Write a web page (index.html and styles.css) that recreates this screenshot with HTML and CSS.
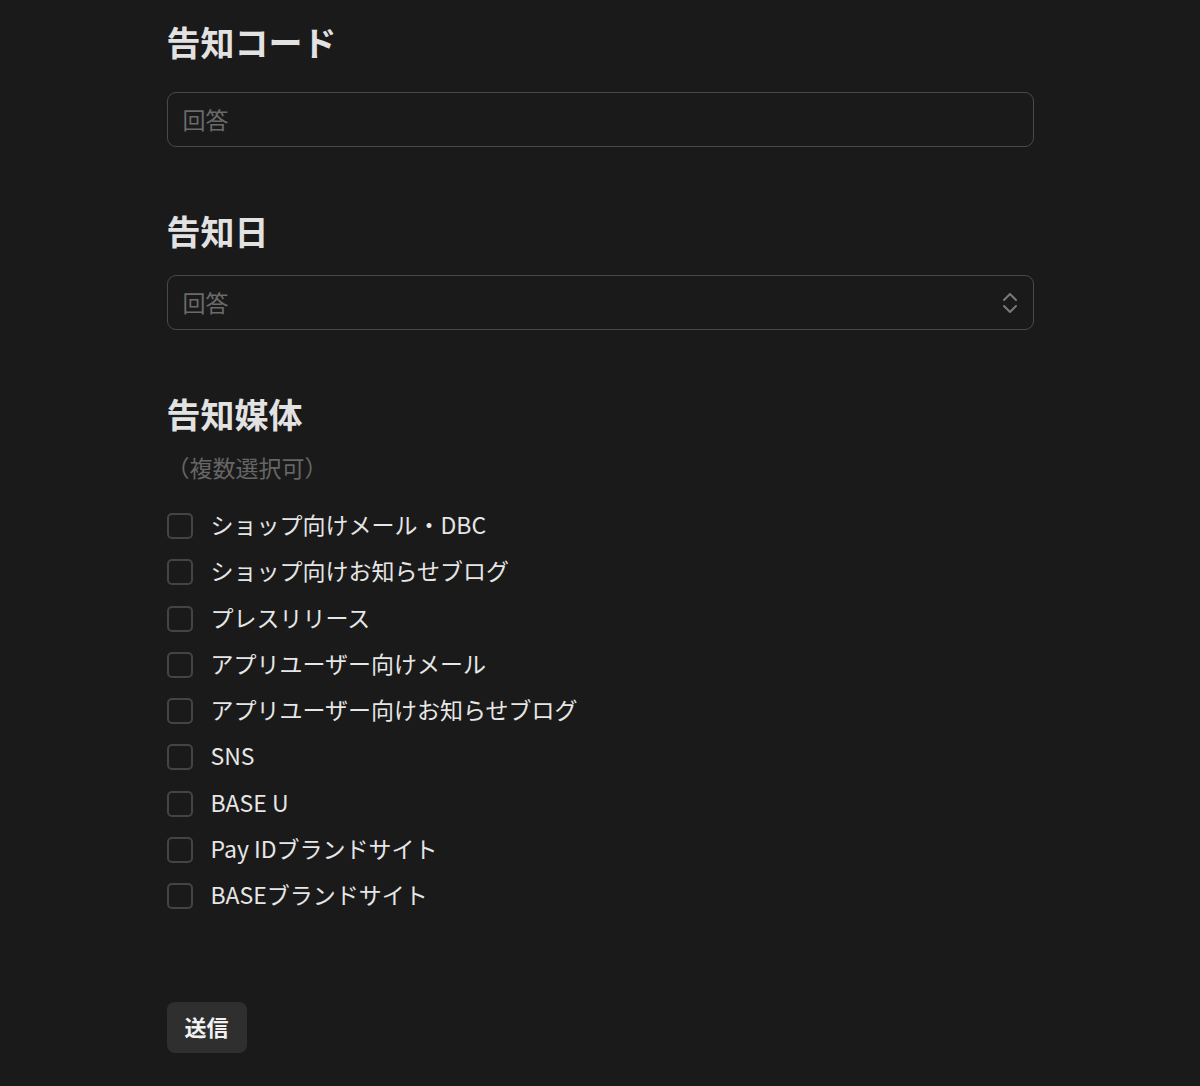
FILE: index.html
```html
<!DOCTYPE html>
<html lang="ja">
<head>
<meta charset="utf-8">
<title>告知フォーム</title>
<link rel="stylesheet" href="styles.css">
</head>
<body>
<form class="form">
  <section class="field field-first">
    <h2 class="field-title">告知コード</h2>
    <div class="input"><span class="placeholder">回答</span></div>
  </section>
  <section class="field">
    <h2 class="field-title title-date">告知日</h2>
    <div class="input input-select">
      <span class="placeholder">回答</span>
      <svg class="chevron" width="16" height="22" viewBox="0 0 16 22" fill="none" stroke="#7a7a7a" stroke-width="2" stroke-linecap="round" stroke-linejoin="round"><path d="M2 8 L8 2 L14 8"/><path d="M2 14 L8 20 L14 14"/></svg>
    </div>
  </section>
  <section class="field">
    <h2 class="field-title title-media">告知媒体</h2>
    <p class="note">（複数選択可）</p>
    <ul class="options">
      <li class="option"><span class="box"></span><span class="label">ショップ向けメール・DBC</span></li>
      <li class="option"><span class="box"></span><span class="label">ショップ向けお知らせブログ</span></li>
      <li class="option"><span class="box"></span><span class="label">プレスリリース</span></li>
      <li class="option"><span class="box"></span><span class="label">アプリユーザー向けメール</span></li>
      <li class="option"><span class="box"></span><span class="label">アプリユーザー向けお知らせブログ</span></li>
      <li class="option"><span class="box"></span><span class="label">SNS</span></li>
      <li class="option"><span class="box"></span><span class="label">BASE U</span></li>
      <li class="option"><span class="box"></span><span class="label">Pay IDブランドサイト</span></li>
      <li class="option"><span class="box"></span><span class="label">BASEブランドサイト</span></li>
    </ul>
  </section>
  <div class="actions">
    <button type="button" class="submit"><span class="submit-text">送信</span></button>
  </div>
</form>
</body>
</html>
```
FILE: styles.css
```css
html, body {
  margin: 0;
  padding: 0;
  background: #1a1a1a;
}
body {
  color: #e4e4e4;
  font-family: "Noto Sans CJK JP", "Liberation Sans", sans-serif;
  height: 1086px;
  overflow: hidden;
}
.form {
  width: 867px;
  margin: 0 auto;
  padding-top: 20px;
  display: flex;
  flex-direction: column;
}
.field {
  display: flex;
  flex-direction: column;
  margin-top: 62px;
}
.field-first {
  margin-top: 0;
}
.field-title {
  margin: 0 0 28px;
  font-size: 34px;
  line-height: 44px;
  font-weight: 700;
  color: #e2e2e2;
}
.title-date {
  margin-bottom: 22px;
}
.title-media {
  margin-bottom: 15px;
}
.input {
  box-sizing: border-box;
  height: 55px;
  border: 1.5px solid #4a4a4a;
  border-radius: 9px;
  padding: 0 15px 2px;
  display: flex;
  align-items: center;
  justify-content: space-between;
  background: #1a1a1a;
}
.placeholder {
  font-size: 23px;
  color: #6a6a6a;
}
.chevron {
  margin-top: 2px;
}
.note {
  margin: 0 0 2px;
  font-size: 23px;
  line-height: 32px;
  color: #666666;
}
.options {
  list-style: none;
  margin: 17px 0 0;
  padding: 0;
  display: flex;
  flex-direction: column;
}
.option {
  height: 46.25px;
  display: flex;
  align-items: center;
  gap: 18px;
}
.box {
  box-sizing: border-box;
  width: 26px;
  height: 26px;
  margin-top: 2px;
  border: 2px solid #444444;
  border-radius: 5px;
  flex-shrink: 0;
}
.label {
  font-size: 23px;
  color: #e6e6e6;
  margin-bottom: 2px;
}
.actions {
  margin-top: 84px;
}
.submit {
  height: 51px;
  padding: 0 18px 3px;
  border: none;
  border-radius: 8px;
  background: #2f2f2f;
  color: #f2f2f2;
  font-family: "Noto Sans CJK JP", sans-serif;
  font-size: 22px;
  font-weight: 700;
}
```
